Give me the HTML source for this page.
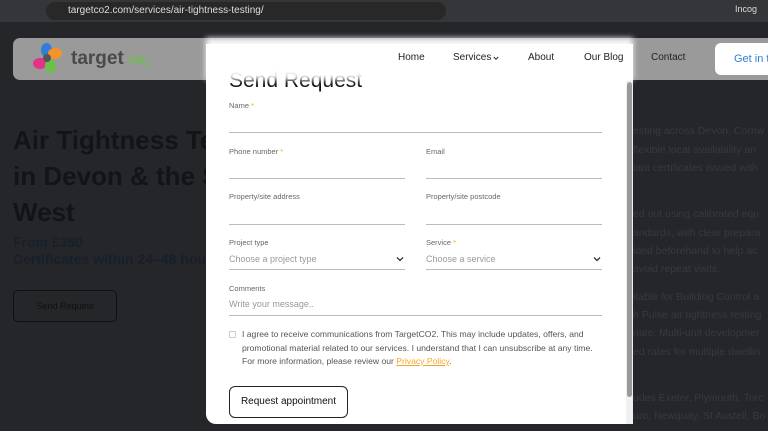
<!DOCTYPE html>
<html><head><meta charset="utf-8"><style>
*{margin:0;padding:0;box-sizing:border-box}
body{width:768px;height:431px;overflow:hidden;background:#25262a;font-family:"Liberation Sans",sans-serif;position:relative}
.chrome{position:absolute;left:0;top:0;width:768px;height:22px;background:#35363a}
.url{position:absolute;left:46px;top:2px;width:400px;height:18px;border-radius:9px;background:#282828;color:#ddd;font-size:10px;line-height:18px;padding-left:22px}
.hdr{position:absolute;left:13px;top:38px;width:770px;height:42px;background:#9a9a9a;border-radius:7px}
.bg{position:absolute;color:#131417;font-weight:bold}
.modal{position:absolute;left:206px;top:44px;width:427px;height:380px;background:#fff;border-radius:0 0 0 10px;overflow:hidden}
.sb{position:absolute;left:626px;top:80px;width:7px;height:344px;background:#f0f0f0}
.sb div{position:absolute;left:1px;top:2px;width:5px;height:315px;background:#999;border-radius:3px}
.lbl{position:absolute;font-size:7.5px;color:#666}
.lbl b{color:#f5a623;font-weight:normal}
.ln{position:absolute;height:1px;background:#bbb}
.ph{position:absolute;font-size:9px;color:#999}
.chev{position:absolute}
.rt{position:absolute;left:633px;color:#38393d;font-size:10.5px;white-space:nowrap}
</style></head><body>
<div class="chrome"><div class="url">targetco2.com/services/air-tightness-testing/</div>
<div style="position:absolute;left:735px;top:4px;color:#ddd;font-size:9px">Incog</div></div>
<div class="bg" style="left:13px;top:122px;font-size:26px;line-height:36px">Air Tightness Te<br>in Devon &amp; the S<br>West</div>
<div class="bg" style="left:13px;top:234px;font-size:14px;line-height:17px;color:#17202a">From £350<br>Certificates within 24–48 hou</div>
<div style="position:absolute;left:13px;top:290px;width:104px;height:32px;border:1px solid #111;border-radius:5px;color:#111;font-size:9px;text-align:center;line-height:30px">Send Request</div>
<div class="rt" style="top:125px">esting across Devon, Cornw</div>
<div class="rt" style="top:144px">flexible local availability an</div>
<div class="rt" style="top:162px">iant certificates issued with</div>
<div class="rt" style="top:208px">ed out using calibrated equ</div>
<div class="rt" style="top:227px">andards, with clear prepara</div>
<div class="rt" style="top:245px">ided beforehand to help ac</div>
<div class="rt" style="top:263px">avoid repeat visits.</div>
<div class="rt" style="top:291px">itable for Building Control a</div>
<div class="rt" style="top:309px">h Pulse air tightness testing</div>
<div class="rt" style="top:327px">riate. Multi-unit developmer</div>
<div class="rt" style="top:346px">ed rates for multiple dwellin</div>
<div class="rt" style="top:392px">udes Exeter, Plymouth, Torc</div>
<div class="rt" style="top:410px">uro, Newquay, St Austell, Bo</div>
<div class="hdr"></div>
<div style="position:absolute;left:32px;top:43px;width:32px;height:32px">
<div style="position:absolute;left:9px;top:0;width:11px;height:14px;background:#2f7fd8;border-radius:50%"></div>
<div style="position:absolute;left:16px;top:5px;width:14px;height:11px;background:#f6922a;border-radius:50%"></div>
<div style="position:absolute;left:1px;top:15px;width:14px;height:11px;background:#e4318a;border-radius:50%"></div>
<div style="position:absolute;left:13px;top:16px;width:11px;height:14px;background:#6cc04a;border-radius:50%"></div>
<div style="position:absolute;left:11px;top:11px;width:8px;height:8px;background:#555;border-radius:50%"></div></div>
<div style="position:absolute;left:71px;top:48px;font-size:19px;font-weight:bold;color:#4a4a4a">target <span style="color:#6cc04a;font-size:14px">co<sub style="font-size:7px">2</sub></span></div>
<div class="modal">
<div style="position:absolute;left:23px;top:25px;font-size:21px;color:#111">Send Request</div>
<div class="lbl" style="left:23px;top:57px">Name <b>*</b></div><div class="ln" style="left:23px;width:373px;top:88px"></div>
<div class="lbl" style="left:23px;top:103px">Phone number <b>*</b></div><div class="ln" style="left:23px;top:134px;width:176px"></div>
<div class="lbl" style="left:220px;top:103px">Email</div><div class="ln" style="left:220px;top:134px;width:176px"></div>
<div class="lbl" style="left:23px;top:148px">Property/site address</div><div class="ln" style="left:23px;top:180px;width:176px"></div>
<div class="lbl" style="left:220px;top:148px">Property/site postcode</div><div class="ln" style="left:220px;top:180px;width:176px"></div>
<div class="lbl" style="left:23px;top:194px">Project type</div><div class="ph" style="left:23px;top:210px">Choose a project type</div>
<svg class="chev" style="left:190px;top:212px" width="8" height="6" viewBox="0 0 8 6"><path d="M1 1.5L4 4.5L7 1.5" fill="none" stroke="#333" stroke-width="1.3"/></svg>
<div class="ln" style="left:23px;top:225px;width:176px"></div>
<div class="lbl" style="left:220px;top:194px">Service <b>*</b></div><div class="ph" style="left:220px;top:210px">Choose a service</div>
<svg class="chev" style="left:387px;top:212px" width="8" height="6" viewBox="0 0 8 6"><path d="M1 1.5L4 4.5L7 1.5" fill="none" stroke="#333" stroke-width="1.3"/></svg>
<div class="ln" style="left:220px;top:225px;width:176px"></div>
<div class="lbl" style="left:23px;top:240px">Comments</div><div class="ph" style="left:23px;top:255px">Write your message..</div><div class="ln" style="left:23px;top:271px;width:373px"></div>
<div style="position:absolute;left:23px;top:287px;width:7px;height:7px;border:1px solid #ccc;border-radius:1px"></div>
<div style="position:absolute;left:36px;top:284px;font-size:8.6px;line-height:13.5px;color:#555;width:360px">I agree to receive communications from TargetCO2. This may include updates, offers, and promotional material related to our services. I understand that I can unsubscribe at any time. For more information, please review our <span style="color:#f5a623;text-decoration:underline">Privacy Policy</span>.</div>
<div style="position:absolute;left:23px;top:342px;width:119px;height:32px;border:1.5px solid #222;border-radius:6px;font-size:10px;color:#111;text-align:center;line-height:29px">Request appointment</div>
</div>
<div class="sb"><div></div></div>
<div style="position:absolute;left:206px;top:38px;width:427px;height:42px;background:rgba(255,255,255,.93);filter:blur(3px)"></div>
<div style="position:absolute;top:52px;left:398px;font-size:10px;color:#222">Home</div>
<div style="position:absolute;top:52px;left:453px;font-size:10px;color:#222">Services</div>
<svg style="position:absolute;left:493px;top:56px" width="6" height="5" viewBox="0 0 6 5"><path d="M0.8 1L3 3.3L5.2 1" fill="none" stroke="#222" stroke-width="1"/></svg>
<div style="position:absolute;top:52px;left:528px;font-size:10px;color:#222">About</div>
<div style="position:absolute;top:52px;left:584px;font-size:10px;color:#222">Our Blog</div>
<div style="position:absolute;top:52px;left:651px;font-size:10px;color:#222">Contact</div>
<div style="position:absolute;top:43px;left:715px;width:70px;height:32px;background:#fff;border-radius:6px;color:#2f7fd8;font-size:11px;line-height:32px;padding-left:19px">Get in t</div>
</body></html>
